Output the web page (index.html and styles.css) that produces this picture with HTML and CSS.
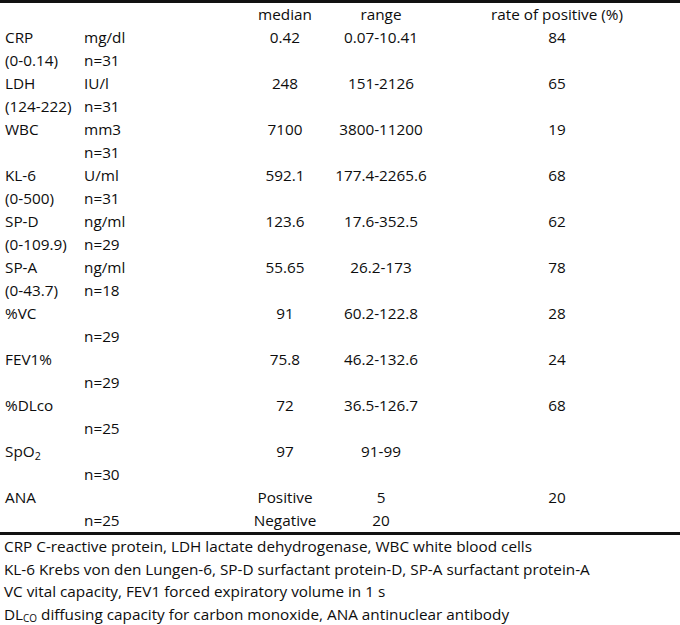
FILE: index.html
```html
<!DOCTYPE html>
<html>
<head>
<meta charset="utf-8">
<link rel="stylesheet" href="styles.css">
</head>
<body>
<div class="wrap">
<table class="data">
<colgroup>
<col class="c1"><col class="c2"><col class="c3"><col class="c4"><col class="c5">
</colgroup>
<thead>
<tr><th></th><th></th><th class="num">median</th><th class="num">range</th><th class="num">rate of positive (%)</th></tr>
</thead>
<tbody>
<tr><td class="lbl">CRP</td><td>mg/dl</td><td class="num">0.42</td><td class="num">0.07-10.41</td><td class="num">84</td></tr>
<tr><td class="lbl">(0-0.14)</td><td>n=31</td><td></td><td></td><td></td></tr>
<tr><td class="lbl">LDH</td><td>IU/l</td><td class="num">248</td><td class="num">151-2126</td><td class="num">65</td></tr>
<tr><td class="lbl">(124-222)</td><td>n=31</td><td></td><td></td><td></td></tr>
<tr><td class="lbl">WBC</td><td>mm3</td><td class="num">7100</td><td class="num">3800-11200</td><td class="num">19</td></tr>
<tr><td class="lbl"></td><td>n=31</td><td></td><td></td><td></td></tr>
<tr><td class="lbl">KL-6</td><td>U/ml</td><td class="num">592.1</td><td class="num">177.4-2265.6</td><td class="num">68</td></tr>
<tr><td class="lbl">(0-500)</td><td>n=31</td><td></td><td></td><td></td></tr>
<tr><td class="lbl">SP-D</td><td>ng/ml</td><td class="num">123.6</td><td class="num">17.6-352.5</td><td class="num">62</td></tr>
<tr><td class="lbl">(0-109.9)</td><td>n=29</td><td></td><td></td><td></td></tr>
<tr><td class="lbl">SP-A</td><td>ng/ml</td><td class="num">55.65</td><td class="num">26.2-173</td><td class="num">78</td></tr>
<tr><td class="lbl">(0-43.7)</td><td>n=18</td><td></td><td></td><td></td></tr>
<tr><td class="lbl">%VC</td><td></td><td class="num">91</td><td class="num">60.2-122.8</td><td class="num">28</td></tr>
<tr><td class="lbl"></td><td>n=29</td><td></td><td></td><td></td></tr>
<tr><td class="lbl">FEV1%</td><td></td><td class="num">75.8</td><td class="num">46.2-132.6</td><td class="num">24</td></tr>
<tr><td class="lbl"></td><td>n=29</td><td></td><td></td><td></td></tr>
<tr><td class="lbl">%DLco</td><td></td><td class="num">72</td><td class="num">36.5-126.7</td><td class="num">68</td></tr>
<tr><td class="lbl"></td><td>n=25</td><td></td><td></td><td></td></tr>
<tr><td class="lbl">SpO<sub class="sub">2</sub></td><td></td><td class="num">97</td><td class="num">91-99</td><td class="num"></td></tr>
<tr><td class="lbl"></td><td>n=30</td><td></td><td></td><td></td></tr>
<tr><td class="lbl">ANA</td><td></td><td class="num">Positive</td><td class="num">5</td><td class="num">20</td></tr>
<tr><td class="lbl"></td><td>n=25</td><td class="num">Negative</td><td class="num">20</td><td></td></tr>
</tbody>
</table>
<div class="notes">
<p>CRP C-reactive protein, LDH lactate dehydrogenase, WBC white blood cells</p>
<p>KL-6 Krebs von den Lungen-6, SP-D surfactant protein-D, SP-A surfactant protein-A</p>
<p>VC vital capacity, FEV1 forced expiratory volume in 1 s</p>
<p>DL<sub class="sub sm">CO</sub> diffusing capacity for carbon monoxide, ANA antinuclear antibody</p>
</div>
</div>
</body>
</html>
```
FILE: styles.css
```css
html, body {
  margin: 0;
  padding: 0;
  background: #fff;
}
body {
  font-family: "Open Sans", "Lato", "Liberation Sans", sans-serif;
  font-size: 15.3px;
  color: #0d0d0d;
}
.wrap {
  width: 680px;
}
.data {
  width: 680px;
  border-collapse: collapse;
  table-layout: fixed;
  border-top: 3px solid #111;
  border-bottom: 3px solid #111;
}
.c1 { width: 84px; }
.c2 { width: 158px; }
.c3 { width: 86px; }
.c4 { width: 106px; }
.c5 { width: 246px; }
.data th, .data td {
  padding: 0;
  height: 23px;
  line-height: 23px;
  font-weight: normal;
  text-align: left;
  vertical-align: middle;
  white-space: nowrap;
}
.data .lbl {
  padding-left: 5px;
}
.data .num {
  text-align: center;
}
.sub {
  font-size: 0.7em;
  line-height: 0;
  vertical-align: -0.25em;
}
.sub.sm {
  font-size: 0.65em;
}
.notes {
  padding-left: 4px;
}
.notes p {
  margin: 0;
  height: 22.5px;
  line-height: 22.5px;
  white-space: nowrap;
}
```
